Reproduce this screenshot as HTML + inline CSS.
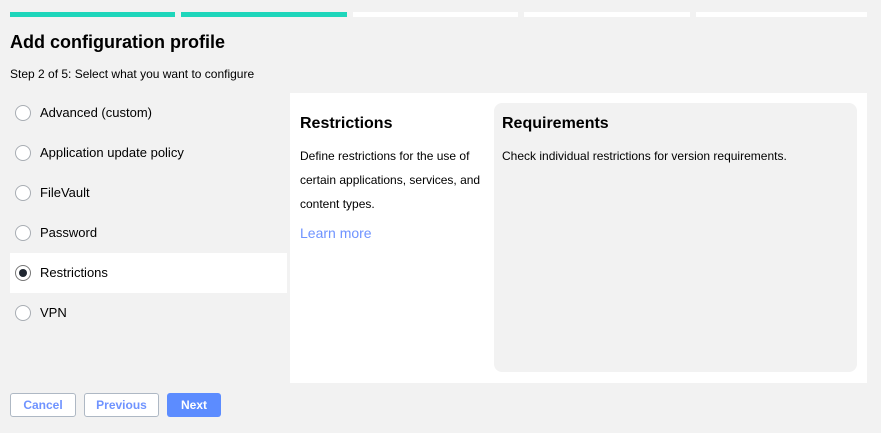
<!DOCTYPE html>
<html><head><style>
*{margin:0;padding:0;box-sizing:border-box}
body{width:881px;height:433px;background:#f2f2f2;font-family:"Liberation Sans",sans-serif;color:#000;position:relative;overflow:hidden}
.bar{position:absolute;top:12px;height:5px}
.abs{position:absolute}
.item{position:absolute;left:10px;width:277px;height:40px;font-size:13px;line-height:40px;padding-left:30px}
.item .r{position:absolute;left:5px;top:12px;width:16px;height:16px;border:1px solid #a8adb3;border-radius:50%;background:#fff}
.sel{background:#fff}
.sel .r{border-color:#777}
.sel .r::after{content:"";position:absolute;left:3px;top:3px;width:8px;height:8px;border-radius:50%;background:#1f2630}
.btn{position:absolute;top:393px;height:24px;border-radius:3px;font-size:12px;font-weight:bold;text-align:center;line-height:22px}
</style></head><body>
<div class="bar" style="left:10px;width:165px;background:#1ed6bb"></div>
<div class="bar" style="left:181px;width:166px;background:#1ed6bb"></div>
<div class="bar" style="left:353px;width:165px;background:#fff"></div>
<div class="bar" style="left:524px;width:166px;background:#fff"></div>
<div class="bar" style="left:696px;width:171px;background:#fff"></div>
<div class="abs" style="left:10px;top:32px;font-size:18px;font-weight:bold">Add configuration profile</div>
<div class="abs" style="left:10px;top:67px;font-size:12px">Step 2 of 5: Select what you want to configure</div>
<div class="item" style="top:93px"><span class="r"></span>Advanced (custom)</div>
<div class="item" style="top:133px"><span class="r"></span>Application update policy</div>
<div class="item" style="top:173px"><span class="r"></span>FileVault</div>
<div class="item" style="top:213px"><span class="r"></span>Password</div>
<div class="item sel" style="top:253px"><span class="r"></span>Restrictions</div>
<div class="item" style="top:293px"><span class="r"></span>VPN</div>
<div class="abs" style="left:290px;top:93px;width:577px;height:290px;background:#fff"></div>
<div class="abs" style="left:300px;top:115px;font-size:16px;font-weight:bold">Restrictions</div>
<div class="abs" style="left:300px;top:144px;width:190px;font-size:12px;line-height:24px">Define restrictions for the use of certain applications, services, and content types.</div>
<div class="abs" style="left:300px;top:225px;font-size:14px;color:#6f93ff">Learn more</div>
<div class="abs" style="left:494px;top:103px;width:363px;height:269px;background:#f2f2f2;border-radius:8px"></div>
<div class="abs" style="left:502px;top:115px;font-size:16px;font-weight:bold">Requirements</div>
<div class="abs" style="left:502px;top:149px;font-size:12px">Check individual restrictions for version requirements.</div>
<div class="btn" style="left:10px;width:66px;border:1px solid #aeb8c4;background:#fff;color:#6f93ff">Cancel</div>
<div class="btn" style="left:84px;width:75px;border:1px solid #aeb8c4;background:#fff;color:#6f93ff">Previous</div>
<div class="btn" style="left:167px;width:54px;background:#5c8cff;color:#fff;line-height:24px">Next</div>
</body></html>
